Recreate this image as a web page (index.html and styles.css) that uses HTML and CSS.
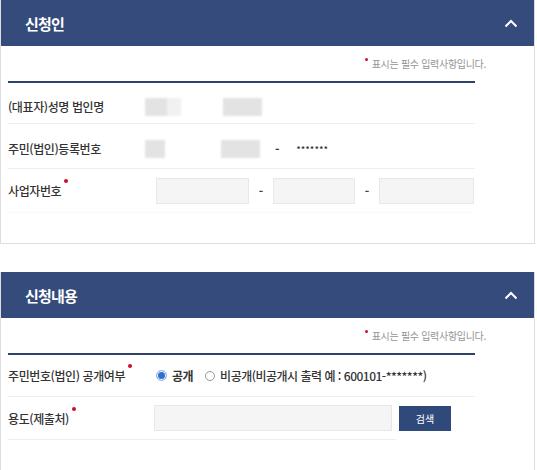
FILE: index.html
```html
<!DOCTYPE html>
<html lang="ko">
<head>
    <meta charset="UTF-8">
    <title>신청</title>
    <link rel="stylesheet" href="styles.css">
</head>
<body>
    <div class="panel">
        <div class="panel-head">
            <h2>신청인</h2>
            <svg class="fold" width="14" height="9" viewBox="0 0 14 9"><polyline points="1.5,7.5 7,2 12.5,7.5" fill="none" stroke="#fff" stroke-width="2"/></svg>
        </div>
        <div class="panel-body">
            <p class="notice"><span class="dot"></span>표시는 필수 입력사항입니다.</p>
            <div class="form">
                <div class="row r1">
                    <div class="label">(대표자)성명 법인명</div>
                    <div class="value">
                        <span class="blur b1"></span>
                        <span class="blur b2"></span>
                    </div>
                </div>
                <div class="row r2">
                    <div class="label">주민(법인)등록번호</div>
                    <div class="value">
                        <span class="blur b3"></span>
                        <span class="blur b2"></span>
                        <span class="dash">-</span>
                        <span class="mask">*******</span>
                    </div>
                </div>
                <div class="row r3">
                    <div class="label">사업자번호<span class="req"></span></div>
                    <div class="value">
                        <input class="txt w1" type="text">
                        <span class="sep">-</span>
                        <input class="txt w2" type="text">
                        <span class="sep">-</span>
                        <input class="txt w3" type="text">
                    </div>
                </div>
            </div>
        </div>
    </div>

    <div class="panel second">
        <div class="panel-head">
            <h2>신청내용</h2>
            <svg class="fold" width="14" height="9" viewBox="0 0 14 9"><polyline points="1.5,7.5 7,2 12.5,7.5" fill="none" stroke="#fff" stroke-width="2"/></svg>
        </div>
        <div class="panel-body">
            <p class="notice"><span class="dot"></span>표시는 필수 입력사항입니다.</p>
            <div class="form">
                <div class="row">
                    <div class="label">주민번호(법인) 공개여부<span class="req"></span></div>
                    <div class="value">
                        <label class="radio on"><i></i>공개</label>
                        <label class="radio"><i></i>비공개(비공개시 출력 예 : 600101-*******)</label>
                    </div>
                </div>
                <div class="row short">
                    <div class="label">용도(제출처)<span class="req"></span></div>
                    <div class="value">
                        <input class="txt w4" type="text">
                        <button class="btn">검색</button>
                    </div>
                </div>
            </div>
        </div>
    </div>
</body>
</html>
```

FILE: styles.css
```css
body{
    margin: 0;
    background: #fff;
    font-family: "Noto Sans CJK KR", "Noto Sans", sans-serif;
    color: #333;
}
.panel{
    width: 535px;
    box-sizing: border-box;
    border: 1px solid #dedede;
    border-top: none;
    background: #fff;
}
.panel.second{
    margin-top: 28px;
    border-bottom: none;
}
.panel-head{
    height: 46px;
    background: #344b7b;
    display: flex;
    align-items: center;
    justify-content: space-between;
    padding: 0 16px 0 24px;
}
.panel-head h2{
    margin: 0;
    font-size: 15px;
    font-weight: bold;
    color: #fff;
    letter-spacing: -0.8px;
}
.panel-body{
    padding: 0 0 30px 7px;
}
.notice{
    margin: 0;
    height: 35px;
    box-sizing: border-box;
    padding: 10px 48px 0 0;
    text-align: right;
    font-size: 10px;
    color: #959595;
    letter-spacing: -0.3px;
}
.dot{
    display: inline-block;
    width: 3px;
    height: 3px;
    border-radius: 50%;
    background: #c8102e;
    vertical-align: top;
    margin: 2px 4px 0 0;
}
.form{
    width: 467px;
    border-top: 2px solid #2d416d;
}
.row{
    display: flex;
    align-items: center;
    height: 42px;
    box-sizing: border-box;
    border-bottom: 1px solid #efefef;
}
.row.r1{
    height: 41px;
    padding-top: 7px;
}
.row.r2{
    height: 45px;
    padding-top: 5px;
}
.row.r3{
    height: 44px;
    border-bottom-color: #fafafa;
}
.row.short{
    width: 388px;
    height: 43px;
}
.label{
    width: 146px;
    flex: none;
    font-size: 12px;
    font-weight: 500;
    letter-spacing: -0.4px;
    color: #333;
}
.req{
    display: inline-block;
    width: 4px;
    height: 4px;
    border-radius: 50%;
    background: #c8102e;
    vertical-align: top;
    margin: -3px 0 0 3px;
}
.value{
    display: flex;
    align-items: center;
    font-size: 12px;
}
.blur{
    display: inline-block;
    background: #e3e3e3;
    filter: blur(1px);
}
.b1{
    width: 22px;
    height: 18px;
    margin-left: -9px;
    box-shadow: 14px 0 0 #f1f1f1;
}
.b3{
    width: 20px;
    height: 18px;
    margin-left: -9px;
}
.b2{
    width: 39px;
    height: 18px;
    margin-left: 56px;
}
.dash{
    margin-left: 15px;
    font-weight: bold;
    color: #333;
}
.mask{
    margin-left: 17px;
    font-size: 8px;
    font-weight: bold;
    letter-spacing: 0.5px;
    color: #333;
}
.txt{
    height: 26px;
    box-sizing: border-box;
    border: 1px solid #e8e8e8;
    background: #f5f5f5;
    margin: 0;
    padding: 0 6px;
}
.w1{ width: 93px; margin-left: 2px; }
.w2{ width: 82px; }
.w3{ width: 95px; }
.w4{ width: 238px; }
.sep{
    width: 24px;
    text-align: center;
    font-weight: bold;
    color: #444;
}
.radio{
    display: inline-flex;
    align-items: center;
    font-size: 12px;
    font-weight: 500;
    letter-spacing: -0.5px;
    color: #333;
    margin-right: 12px;
}
.radio i{
    width: 8px;
    height: 8px;
    border: 1px solid #999;
    border-radius: 50%;
    margin-right: 5px;
    box-sizing: content-box;
}
.radio.on{
    font-weight: bold;
    margin-left: 2px;
}
.radio.on i{
    width: 9px;
    height: 9px;
    border-color: #9dbdeb;
    background: #2f6fd0;
    box-shadow: inset 0 0 0 1px #fff;
}
.btn{
    margin-left: 7px;
    width: 52px;
    height: 25px;
    border: none;
    background: #2f4a7a;
    color: #fff;
    font-family: inherit;
    font-size: 10px;
}
```
